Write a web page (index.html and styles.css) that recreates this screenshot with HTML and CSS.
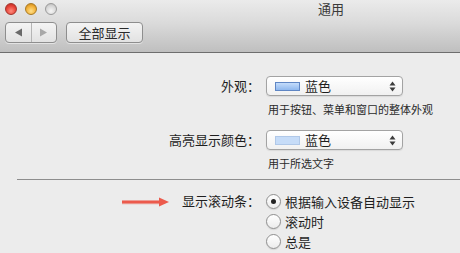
FILE: index.html
```html
<!DOCTYPE html>
<html lang="zh">
<head>
<meta charset="utf-8">
<link rel="stylesheet" href="styles.css">
</head>
<body>
<div class="window">
  <header class="toolbar">
    <div class="titlerow">
      <div class="lights">
        <span class="light red"></span>
        <span class="light yellow"></span>
        <span class="light gray"></span>
      </div>
      <div class="title">通用</div>
    </div>
    <div class="buttons">
      <div class="seg">
        <span class="seg-part">
          <svg width="9" height="9" viewBox="0 0 9 9"><path d="M8 0.5 L1 4.5 L8 8.5 Z" fill="#6a6a6a"/></svg>
        </span>
        <span class="seg-div"></span>
        <span class="seg-part">
          <svg width="9" height="9" viewBox="0 0 9 9"><path d="M1 0.5 L8 4.5 L1 8.5 Z" fill="#a8a8a8"/></svg>
        </span>
      </div>
      <div class="btn">全部显示</div>
    </div>
  </header>
  <main class="content">
    <div class="form">
      <div class="label row1">外观：</div>
      <div class="field row1">
        <div class="popup">
          <span class="swatch dark"></span>
          <span class="popup-text">蓝色</span>
          <svg class="updown" width="7" height="11" viewBox="0 0 7 11"><path d="M3.5 0.5 L6.5 4.5 L0.5 4.5 Z M3.5 10.5 L6.5 6.5 L0.5 6.5 Z" fill="#3c3c3c"/></svg>
        </div>
        <div class="desc">用于按钮、菜单和窗口的整体外观</div>
      </div>
      <div class="label row2">高亮显示颜色：</div>
      <div class="field row2">
        <div class="popup">
          <span class="swatch light-sw"></span>
          <span class="popup-text">蓝色</span>
          <svg class="updown" width="7" height="11" viewBox="0 0 7 11"><path d="M3.5 0.5 L6.5 4.5 L0.5 4.5 Z M3.5 10.5 L6.5 6.5 L0.5 6.5 Z" fill="#3c3c3c"/></svg>
        </div>
        <div class="desc">用于所选文字</div>
      </div>
    </div>
    <div class="sep"></div>
    <div class="form scroll">
      <div class="label label-arrow">
        <svg class="arrow" width="48" height="14" viewBox="0 0 48 14"><path d="M0 7.6 H38" stroke="#e8a9a2" stroke-width="3.6" opacity="0.5"/><path d="M0 7 H38" stroke="#ec5a4c" stroke-width="3"/><path d="M37 2.5 L47 7 L37 11.5 Z" fill="#ec5a4c"/></svg>
        <span>显示滚动条：</span>
      </div>
      <div class="radios">
        <div class="radio-row"><span class="radio on"></span><span>根据输入设备自动显示</span></div>
        <div class="radio-row"><span class="radio"></span><span>滚动时</span></div>
        <div class="radio-row"><span class="radio"></span><span>总是</span></div>
      </div>
    </div>
  </main>
</div>
</body>
</html>
```

FILE: styles.css
```css
* { box-sizing: border-box; }
html, body {
  margin: 0;
  padding: 0;
  width: 460px;
  height: 253px;
  overflow: hidden;
  background: #ececec;
  font-family: "Noto Sans CJK SC", "Noto Sans", sans-serif;
  color: #1e1e1e;
}
.window { width: 460px; height: 253px; }

.toolbar {
  height: 53px;
  background: linear-gradient(to bottom, #ebebeb 0%, #dadada 45%, #bfbfbf 100%);
  border-bottom: 1px solid #6e6e6e;
}
.titlerow {
  height: 19px;
  display: flex;
  align-items: flex-start;
}
.lights {
  display: flex;
  gap: 8px;
  padding: 3px 0 0 5px;
}
.light {
  width: 12px;
  height: 12px;
  border-radius: 50%;
  display: block;
}
.light.red {
  background: radial-gradient(circle at 50% 70%, #ff8c7e 0%, #e8453a 55%, #b3241c 100%);
  border: 0.5px solid #a3342c;
}
.light.yellow {
  background: radial-gradient(circle at 50% 70%, #ffe08a 0%, #f2b13a 55%, #c47f12 100%);
  border: 0.5px solid #a97a22;
}
.light.gray {
  background: radial-gradient(circle at 50% 70%, #f6f6f6 0%, #d5d5d5 60%, #b2b2b2 100%);
  border: 0.5px solid #9a9a9a;
}
.title {
  margin-left: 261px;
  font-size: 13px;
  line-height: 17px;
  color: #3a3a3a;
}
.buttons {
  display: flex;
  gap: 9px;
  padding: 3px 0 0 5px;
}
.seg, .btn {
  height: 21px;
  border: 1px solid #8e8e8e;
  border-radius: 4px;
  background: linear-gradient(to bottom, #f4f4f4, #e2e2e2);
  box-shadow: 0 1px 0 rgba(255,255,255,0.5);
}
.seg {
  width: 52px;
  display: flex;
  align-items: center;
}
.seg-part {
  flex: 1;
  display: flex;
  align-items: center;
  justify-content: center;
}
.seg-div {
  width: 1px;
  height: 19px;
  background: #b5b5b5;
}
.btn {
  width: 77px;
  font-size: 13px;
  line-height: 19px;
  text-align: center;
  color: #2a2a2a;
}

.content { padding-top: 23px; }
.form {
  display: grid;
  grid-template-columns: 260px 1fr;
  column-gap: 6px;
  align-items: start;
}
.label {
  text-align: right;
  font-size: 13px;
  line-height: 20px;
  white-space: nowrap;
}
.field { display: flex; flex-direction: column; }
.row2 { margin-top: 13px; }
.popup {
  width: 137px;
  height: 20px;
  border: 1px solid #a3a3a3;
  border-radius: 4px;
  background: linear-gradient(to bottom, #ffffff, #f1f1f1);
  box-shadow: 0 1px 1px rgba(0,0,0,0.08);
  display: flex;
  align-items: center;
  padding-left: 8px;
  padding-right: 6px;
}
.swatch {
  width: 25px;
  height: 9px;
  display: block;
}
.swatch.dark {
  border: 1px solid #5f86c4;
  background: linear-gradient(to bottom, #c4dcfb, #8fb8ee);
}
.swatch.light-sw {
  border: 1px solid #b0c8e8;
  background: #c6dcf8;
}
.popup-text {
  margin-left: 5px;
  font-size: 13px;
  line-height: 18px;
  flex: 1;
}
.updown { display: block; }
.desc {
  margin-top: 5px;
  margin-left: 2px;
  font-size: 11px;
  line-height: 16px;
  color: #2a2a2a;
  white-space: nowrap;
}

.sep {
  margin: 8px 0 0 17px;
  height: 1px;
  background: #8d8d8d;
}
.scroll { margin-top: 11px; }
.label-arrow {
  display: flex;
  justify-content: flex-end;
  align-items: center;
}
.arrow { display: block; margin-right: 12px; margin-top: 1px; }
.radios { display: flex; flex-direction: column; }
.radio-row {
  display: flex;
  align-items: center;
  height: 20px;
  font-size: 13px;
  gap: 4px;
}
.radio {
  width: 15px;
  height: 15px;
  border-radius: 50%;
  border: 1px solid #8f8f8f;
  background: linear-gradient(to bottom, #ffffff, #ececec);
  box-shadow: 0 1px 1px rgba(0,0,0,0.1);
  display: flex;
  align-items: center;
  justify-content: center;
}
.radio.on::after {
  content: "";
  width: 5px;
  height: 5px;
  border-radius: 50%;
  background: #222;
}
```
